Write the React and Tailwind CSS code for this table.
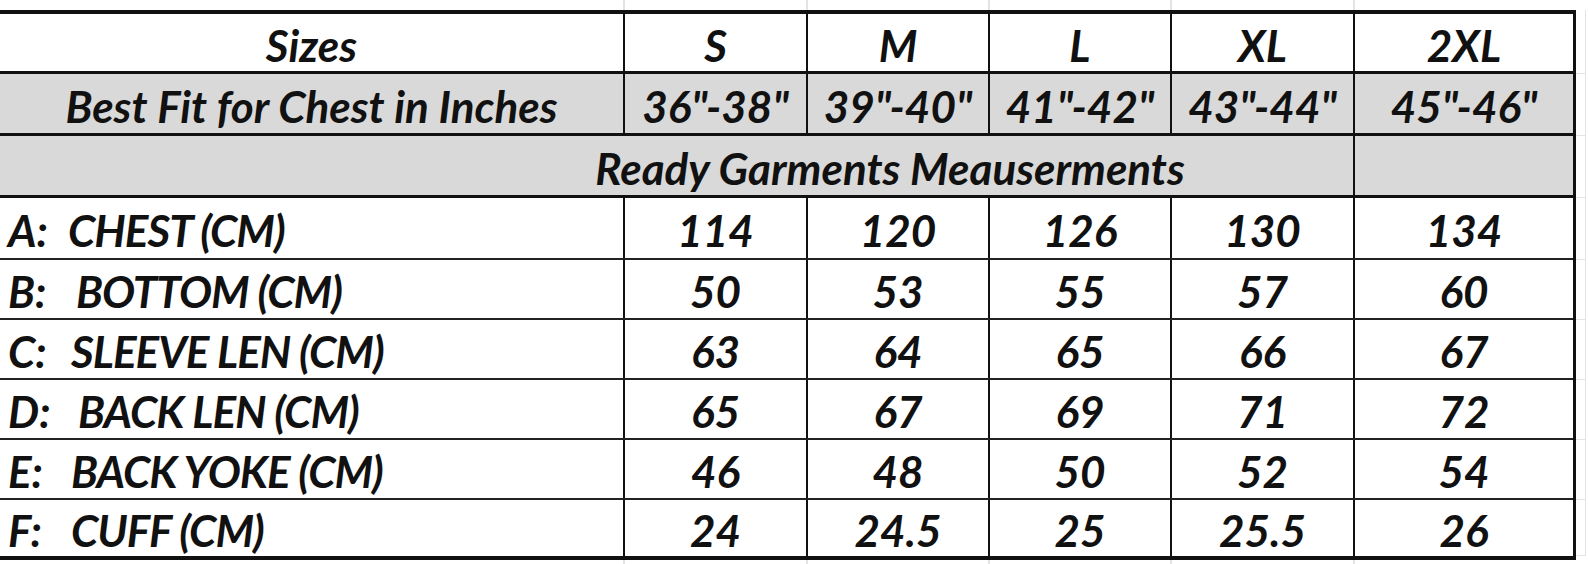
const cols = [
  { w: "w-[625px]", b: "border-r-2" },
  { w: "w-[183px]", b: "border-r-2" },
  { w: "w-[182px]", b: "border-r-2" },
  { w: "w-[182px]", b: "border-r-2" },
  { w: "w-[183px]", b: "border-r-2" },
  { w: "w-[218px]", b: "" },
]

const sizes = ["S", "M", "L", "XL", "2XL"]
const chest = ['36"-38"', '39"-40"', '41"-42"', '43"-44"', '45"-46"']

const rows = [
  { key: "A:", name: "CHEST (CM)", pw: "w-[60px]", vals: ["114", "120", "126", "130", "134"], h: "h-[62px]", b: "border-b-2" },
  { key: "B:", name: "BOTTOM (CM)", pw: "w-[68px]", vals: ["50", "53", "55", "57", "60"], h: "h-[60px]", b: "border-b-2" },
  { key: "C:", name: "SLEEVE LEN (CM)", pw: "w-[63px]", vals: ["63", "64", "65", "66", "67"], h: "h-[60px]", b: "border-b-2" },
  { key: "D:", name: "BACK LEN (CM)", pw: "w-[70px]", vals: ["65", "67", "69", "71", "72"], h: "h-[60px]", b: "border-b-2" },
  { key: "E:", name: "BACK YOKE (CM)", pw: "w-[63px]", vals: ["46", "48", "50", "52", "54"], h: "h-[60px]", b: "border-b-2" },
  { key: "F:", name: "CUFF (CM)", pw: "w-[63px]", vals: ["24", "24.5", "25", "25.5", "26"], h: "h-[56px]", b: "" },
]

// heights of every row, used for the faint sheet grid on the right
const stripRows = ["h-[60px]", "h-[62px]", "h-[62px]", "h-[62px]", "h-[60px]", "h-[60px]", "h-[60px]", "h-[60px]", "h-[56px]"]

function Cell({ col, children, className = "" }) {
  return (
    <div className={`${col.w} ${col.b} border-[#111] h-full flex items-center justify-center pt-1 ${className}`}>
      {children}
    </div>
  )
}

export default function App() {
  return (
    <div className="w-[1588px] h-[564px] bg-white overflow-hidden flex flex-col font-['Lato',sans-serif] font-bold italic text-[#111] text-[44px] leading-none">
      {/* sheet grid above the table */}
      <div className="h-[10px] flex shrink-0">
        {cols.map((c, i) => (
          <div key={i} className={`${c.w} h-full ${c.b ? "border-r-2 border-[#e4e4e4]" : ""}`} />
        ))}
      </div>

      <div className="flex shrink-0">
        <div className="w-[1576px] border-t-4 border-b-4 border-r-[3px] border-[#111]">
          {/* Sizes */}
          <div className="h-[60px] flex border-b-[3px] border-[#111]">
            <Cell col={cols[0]}>Sizes</Cell>
            {sizes.map((s, i) => (
              <Cell key={s} col={cols[i + 1]}>{s}</Cell>
            ))}
          </div>

          {/* Best fit */}
          <div className="h-[62px] flex border-b-[3px] border-[#111] bg-[#d9d9d9]">
            <Cell col={cols[0]}>Best Fit for Chest in Inches</Cell>
            {chest.map((s, i) => (
              <Cell key={s} col={cols[i + 1]}>{s}</Cell>
            ))}
          </div>

          {/* Ready garments */}
          <div className="h-[62px] flex border-b-[3px] border-[#111] bg-[#d9d9d9]">
            <div className="w-[1355px] h-full border-r-2 border-[#111] flex items-center justify-center pl-[427px] pt-1">
              Ready Garments Meauserments
            </div>
            <div className="w-[218px] h-full" />
          </div>

          {rows.map((r) => (
            <div key={r.key} className={`${r.h} flex ${r.b} border-[#222]`}>
              <div className="w-[625px] h-full border-r-2 border-[#111] flex items-center pl-2 pt-1 whitespace-nowrap">
                <span className={`${r.pw} shrink-0`}>{r.key}</span>
                <span className="tracking-[-1px]">{r.name}</span>
              </div>
              {r.vals.map((v, i) => (
                <Cell key={i} col={cols[i + 1]}>{v}</Cell>
              ))}
            </div>
          ))}
        </div>

        {/* sheet grid right of the table */}
        <div className="w-[12px] flex flex-col">
          <div className="h-[4px] w-[10px] border-r border-[#e4e4e4]" />
          {stripRows.map((h, i) => (
            <div key={i} className={`${h} w-[10px] border-r border-b border-[#e4e4e4]`} />
          ))}
        </div>
      </div>

      <div className="flex-1 flex">
        {cols.map((c, i) => (
          <div key={i} className={`${c.w} h-full ${c.b ? "border-r-2 border-[#e4e4e4]" : ""}`} />
        ))}
      </div>
    </div>
  )
}
